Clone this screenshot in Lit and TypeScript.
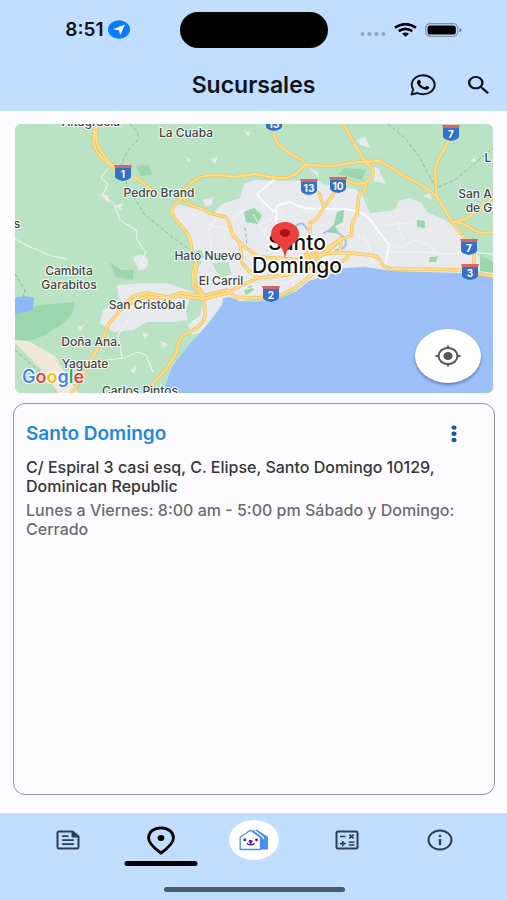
import { LitElement, html, svg, css } from "lit";
import { customElement } from "lit/decorators.js";

const HIGHWAYS = [
  "M96 122 Q93 135 94 144 Q96 152 103 159 L115 169 L140 180 L152 190 L166 196 L182 197 L189 205 L197 207 L213 214 L225 217 Q229 219 230 226 L232 234 L240 243 L258 257 L277 258 L303 260 Q312 252 327 248 L340 240",
  "M98 122 Q94 136 98 146 Q102 154 108 161 L117 169",
  "M182 197 L171 210 Q174 218 182 227 Q192 238 191 247 L197 265 L194 280 L203 294",
  "M182 197 Q184 186 200 177 Q216 173 233 177 L255 174 L269 177 L285 178 Q294 176 298 172 Q304 165 307 165 L332 166 L359 162 L379 161 Q390 166 402 175 L425 187 L437 197 L452 222 L469 244",
  "M274 132 Q274 140 279 145 L292 155 Q302 158 305 165",
  "M342 122 L355 145 L365 162 Q374 168 373 174 L365 184 Q368 190 359 195 L357 215 Q350 222 352 235 L340 240 L327 250",
  "M456 122 L449 140 L437 162 L435 172 L437 197",
  "M452 222 Q462 222 469 227 T482 233 L495 232",
  "M452 222 Q464 221 472 215 T495 196",
  "M319 193 L324 207 L317 219 L310 223 L310 240 L304 260",
  "M334 193 L324 207",
  "M332 180 L345 180 L356 184 L364 183",
  "M71 395 L87 367 L100 345 L108 325 L123 307 Q130 297 137 295 L147 293 L167 297 L180 293 L203 296 L227 290 L236 297 L255 298 L279 296 L295 288 L309 277 Q316 270 330 266",
  "M125 308 Q134 299 147 297 L160 298 L180 296 L203 299 L228 293",
  "M150 387 L167 368 L177 352 Q177 340 184 335 L198 327 Q207 318 205 312 L203 297 L193 285 L193 272 L196 262",
  "M240 243 L242 263 L250 272 L258 278 L232 290",
  "M258 278 L287 275 L307 270 L320 256 L333 247 L341 238 L340 253",
  "M303 260 Q320 252 350 253 L370 255 Q379 256 381 262 Q384 268 392 269 L420 269 L463 270 L495 277",
  "M474 249 L474 270",
  "M330 268 L345 260 L350 253",
];

const STREETS = [
  "M275 179 L257 194 L262 201 L275 212 L277 206 L289 202 L304 208 L319 209 L345 209 Q364 211 371 221 L389 245 L385 266",
  "M277 212 L276 222 L284 230",
];

const LANES = [
  "M15 239 L30 247 L52 256 L66 259",
  "M108 168 L101 178 L108 184 L103 194 L114 204 L120 220 L136 230 L137 240 L146 252 L140 265",
  "M385 252 L420 252 L447 254 L470 252 L493 254",
  "M362 238 Q371 239 372 264",
  "M384 240 L400 249 L414 240 L430 245 L434 252",
  "M397 222 L404 240 M380 226 L414 222",
  "M92 365 L105 360 L125 358 L137 352 L146 355 L153 372 M122 358 L118 335 L128 320",
  "M247 207 L232 219 M253 214 L268 240 M262 224 L284 212",
  "M218 213 L209 231 L212 255 M207 224 L230 230",
  "M262 290 L282 284 L304 276 M240 290 L272 284",
  "M283 257 L286 278 M292 246 L294 288 M316 241 L318 268 M270 266 L330 258 M268 246 L312 246",
];

const BORDERS = [
  "M130 124 Q140 132 138 140 Q124 152 121 168 L128 188 L145 215 L170 235 L190 250",
  "M388 124 L405 138 L420 158 L436 188 L455 180 L493 148",
  "M15 274 L25 290 L22 302 L15 310",
  "M245 228 L247 244 M15 350 L45 376",
];

const FOREST = [
  "M15 314 Q30 305 52 304 L75 302 Q74 320 52 330 Q36 343 15 340Z",
  "M110 262 L120 270 L134 270 L133 280 L116 277Z",
  "M136 166 L148 165 L153 174 L141 176Z",
  "M190 252 L201 250 L204 257 L192 262Z",
  "M244 212 L254 208 L262 215 L258 224 L246 222Z",
  "M337 212 L344 210 L343 222 L335 226 L340 234 L326 232 L334 224Z",
  "M417 220 L425 221 L425 228 L417 227Z",
  "M430 257 L438 256 L436 262 L429 262Z",
  "M244 290 L251 285 L254 290 L246 295Z",
  "M345 168 L366 170 L362 180 L338 174Z",
  "M480 255 L493 262 L493 273 L480 271Z",
];

const CLEARINGS = [
  "M99 194 L108 195 L109 203 Z",
  "M115 206 L123 203 L121 210Z",
  "M210 159 L218 157 L215 164Z M243 130 L250 132 L249 137Z M186 156 L191 160 L188 162Z",
  "M356 140 L365 137 L371 148 L361 145Z M372 167 L378 168 L386 184 L374 181Z",
  "M310 168 L318 172 L319 178 L312 172Z",
  "M133 258 Q142 250 148 260 Q149 270 139 270Z",
  "M203 200 L213 197 L212 205 L205 206Z",
  "M424 196 L430 193 L432 200Z M470 160 L475 158 L476 163Z",
  "M78 327 L85 324 L80 331Z M142 333 L149 334 L145 339Z M130 370 L137 366 L134 374Z M160 341 L168 344 L163 348Z",
];

const LABELS: [number, number, string][] = [
  [91, 126, "Altagracia"],
  [186, 137, "La Cuaba"],
  [159, 197, "Pedro Brand"],
  [208, 260, "Hato Nuevo"],
  [69, 275, "Cambita"],
  [69, 289, "Garabitos"],
  [221, 285, "El Carril"],
  [147, 309, "San Cristóbal"],
  [91, 346, "Doña Ana."],
  [85, 368, "Yaguate"],
  [140, 395, "Carlos Pintos"],
  [475, 198, "San A"],
  [479, 212, "de G"],
  [17, 228, "s"],
  [488, 162, "L"],
];

const SHIELDS: [number, number, string][] = [
  [123, 173, "1"],
  [274, 123, "13"],
  [451, 133, "7"],
  [309, 187, "13"],
  [338, 185, "10"],
  [469, 247, "7"],
  [470, 272, "3"],
  [271, 294, "2"],
];

@customElement("branch-map")
class BranchMap extends LitElement {
  static styles = css`
    :host {
      display: block;
      position: relative;
      border-radius: 6px;
      overflow: hidden;
      background: #bae3c6;
    }
    .map {
      display: block;
      width: 100%;
      height: 100%;
    }
    .label {
      font: 500 12px Inter, sans-serif;
      fill: #3f4744;
      stroke: #f4f8f5;
      stroke-width: 2px;
      paint-order: stroke;
      text-anchor: middle;
    }
    .city {
      font: 500 21px Inter, sans-serif;
      fill: #111;
      stroke: #fff;
      stroke-width: 3px;
      paint-order: stroke;
      text-anchor: middle;
    }
    .num {
      font: 700 10px Inter, sans-serif;
      fill: #fff;
      text-anchor: middle;
    }
    .brand {
      font: 600 18px Inter, sans-serif;
      stroke: #fff;
      stroke-width: 2px;
      paint-order: stroke;
    }
    .line {
      fill: none;
      stroke-linejoin: round;
      stroke-linecap: round;
    }
    .locate {
      position: absolute;
      right: 12px;
      bottom: 10px;
      width: 66px;
      height: 54px;
      padding: 0;
      border: 0;
      border-radius: 50%;
      background: #fff;
      box-shadow: 0 2px 3px rgba(40, 60, 110, 0.5);
      display: grid;
      place-items: center;
    }
  `;

  render() {
    return html`
      <svg class="map" viewBox="15 124 478 269" preserveAspectRatio="xMidYMid slice" role="img" aria-label="Mapa de Santo Domingo">
        <rect x="-400" y="-100" width="1400" height="800" fill="#bae3c6" />
        <g fill="#e9eaee">
          <path d="M175 204 L190 207 L213 213 L222 204 L240 198 L244 184 L255 180 L280 181 L318 180 L322 184 L356 189 L362 195 L370 213 L395 210 L399 201 L410 198 L421 203 L428 213 L445 220 L454 226 L467 242 L482 260 L493 270 V290 H300 L222 305 L200 333 L192 335 L188 325 L205 308 L200 298 L196 270 L202 262 L193 250 L185 230 L172 212Z" />
          <path d="M117 285 L143 283 L167 283 L187 290 L204 296 L205 316 L190 320 L173 322 L147 322 L133 330 L113 332 L100 323 L103 310 L119 303Z" />
          ${CLEARINGS.map((d) => svg`<path d=${d} />`)}
        </g>
        <path d="M190 298 L203 298 L200 316 L188 324 L186 310Z M212 263 L228 262 L232 274 L220 278Z" fill="#bae3c6" />
        <path d="M13 338 L30 342 L55 356 L66 375 L80 395 H60 L40 368 L13 341Z" fill="#f0e9da" />
        <g fill="#9bd6ad">${FOREST.map((d) => svg`<path d=${d} />`)}</g>
        <path d="M13 298 L25 296 L34 298 L33 310 L22 313 L13 315Z" fill="#8db8f7" />
        <path
          fill="#9dc0f8"
          d="M162 395 L172 367 L187 347 L200 333 L213 318 L222 305 L223 298 L230 297 L240 301 L255 302 L279 299 L295 292 L309 281 L329 274 L345 268 L365 267 L392 271 L459 273 L500 278 L1000 290 V700 H162Z"
        />
        <path class="line" stroke="#a6c0e8" stroke-width="2" d="M324 233 Q330 228 338 233 T346 242 Q346 250 336 250 M296 226 Q303 220 307 229" />
        <g class="line" stroke="#8fb8a0" stroke-width="1" stroke-dasharray="3 3">${BORDERS.map((d) => svg`<path d=${d} />`)}</g>
        <g class="line" stroke="#f3f6f6" stroke-width="1">${LANES.map((d) => svg`<path d=${d} />`)}</g>
        <g class="line" stroke="#fafbfb" stroke-width="2">${STREETS.map((d) => svg`<path d=${d} />`)}</g>
        <g class="line" stroke="#f3c463" stroke-width="3.400">${HIGHWAYS.map((d) => svg`<path d=${d} />`)}</g>
        <g class="line" stroke="#fddf8a" stroke-width="1.800">${HIGHWAYS.map((d) => svg`<path d=${d} />`)}</g>
        ${LABELS.map(([x, y, t]) => svg`<text class="label" x=${x} y=${y}>${t}</text>`)}
        ${SHIELDS.map(
          ([x, y, t]) => svg`
            <g transform="translate(${x} ${y})">
              <path d="M-8 -6 H8 V4 Q7 6 4 7 L0 8 L-4 7 Q-7 6 -8 4Z" fill="#3470c4" />
              <path d="M-9 -8 H9 L8 -5 H-8Z" fill="#dc6464" />
              <text class="num" x="0" y="5">${t}</text>
            </g>`,
        )}
        <text class="city" x="297" y="250">Santo</text>
        <text class="city" x="297" y="273">Domingo</text>
        <path
          d="M285 259 C284 250 281 247 276 243 C272 240 271 237 271 234 C271 227 277 222 285 222 C293 222 299 227 299 234 C299 237 298 240 294 243 C289 247 286 250 285 259Z"
          fill="#ea3f3d"
        />
        <ellipse cx="285" cy="233" rx="5" ry="4" fill="#a91212" />
        <text class="brand" x="22" y="383"><tspan fill="#4285f4">G</tspan><tspan fill="#ea4335">o</tspan><tspan fill="#fbbc05">o</tspan><tspan fill="#4285f4">g</tspan><tspan fill="#34a853">l</tspan><tspan fill="#ea4335">e</tspan></text>
      </svg>
      <button class="locate" aria-label="Mi ubicación">
        <svg width="26" height="22" viewBox="0 0 26 22" fill="none" stroke="#555" stroke-width="2">
          <ellipse cx="13" cy="11" rx="9.500" ry="8" />
          <ellipse cx="13" cy="11" rx="4.600" ry="4" fill="#555" stroke="none" />
          <path d="M13 0.500V3.500M13 18.500V21.500M0.500 11H3.500M22.500 11H25.500" />
        </svg>
      </button>
    `;
  }
}

@customElement("app-root")
class AppRoot extends LitElement {
  static styles = css`
    :host {
      display: flex;
      flex-direction: column;
      min-height: 100vh;
      background: #fcfcff;
      font-family: Inter, "Liberation Sans", sans-serif;
      color: #101418;
    }
    * {
      box-sizing: border-box;
    }
    button {
      padding: 0;
      border: 0;
      background: none;
      color: inherit;
      font: inherit;
    }
    svg {
      display: block;
    }
    header {
      background: #c1ddff;
    }
    .status {
      display: grid;
      grid-template-columns: 1fr 148px 1fr;
      align-items: center;
      height: 59px;
    }
    .clock {
      display: flex;
      align-items: center;
      justify-content: flex-end;
      gap: 4px;
      padding-right: 50px;
      font-size: 19px;
      font-weight: 600;
    }
    .island {
      height: 36px;
      border-radius: 18px;
      background: #000;
    }
    .signals {
      display: flex;
      align-items: center;
      gap: 8px;
      padding-left: 32px;
    }
    .bar {
      display: grid;
      grid-template-columns: 1fr auto 1fr;
      align-items: center;
      height: 52px;
    }
    h1 {
      grid-column: 2;
      margin: 0;
      font-size: 23px;
      line-height: 28px;
      font-weight: 600;
    }
    .actions {
      display: flex;
      justify-content: flex-end;
      gap: 32px;
      padding-right: 18px;
    }
    main {
      flex: 1;
      display: flex;
      flex-direction: column;
      gap: 10px;
      padding: 13px 12px 18px 13px;
    }
    branch-map {
      height: 269px;
      margin: 0 2px;
    }
    .card {
      flex: 1;
      padding: 17px 12px;
      border: 1px solid #96969a;
      border-radius: 12px;
    }
    .head {
      display: flex;
      align-items: center;
      justify-content: space-between;
      height: 26px;
      padding-right: 24px;
      margin-bottom: 11px;
    }
    h2 {
      margin: 0;
      font-size: 19px;
      line-height: 24px;
      font-weight: 600;
      color: #2288dc;
    }
    p {
      margin: 0 0 5px;
      font-size: 16px;
      line-height: 19px;
      color: #36363a;
      font-weight: 500;
    }
    .hours {
      color: #6c6c71;
    }
    nav {
      height: 87px;
      background: #c1ddff;
      display: flex;
      flex-direction: column;
      justify-content: space-between;
      align-items: center;
      padding: 0 20px 8px 21px;
      color: #2e3f50;
    }
    .tabs {
      width: 100%;
      display: grid;
      grid-template-columns: repeat(5, 1fr);
    }
    .tab {
      height: 54px;
      display: grid;
      place-items: center;
    }
    .active {
      color: #000;
      position: relative;
    }
    .active::after {
      content: "";
      position: absolute;
      bottom: 1px;
      left: 50%;
      width: 73px;
      height: 5px;
      border-radius: 3px;
      background: #000;
      transform: translateX(-50%);
    }
    .home {
      width: 50px;
      height: 40px;
      border-radius: 50%;
      background: #fff;
      display: grid;
      place-items: center;
    }
    .indicator {
      width: 181px;
      height: 5px;
      border-radius: 3px;
      background: #4a5b6a;
    }
  `;

  render() {
    return html`
      <header>
        <div class="status">
          <div class="clock">
            <span>8:51</span>
            <svg width="22" height="19" viewBox="0 0 22 19">
              <ellipse cx="11" cy="9.500" rx="11" ry="9.200" fill="#0a7bff" />
              <path d="M17 4.500 L12.200 15 L11 10.200 L5 9.300Z" fill="#fff" />
            </svg>
          </div>
          <div class="island"></div>
          <div class="signals">
            <svg width="26" height="14" viewBox="0 0 26 14" fill="#91a6bf">
              <circle cx="2.500" cy="11" r="2" /><circle cx="9.500" cy="11" r="2" /><circle cx="16.500" cy="11" r="2" /><circle cx="23.500" cy="11" r="2" />
            </svg>
            <svg width="23" height="14" viewBox="0 0 23 14" fill="none" stroke="#000" stroke-width="2.600">
              <path d="M1 4.600 Q11.500 -2.300 22 4.600" />
              <path d="M4.700 8.200 Q11.500 3.600 18.300 8.200" />
              <path d="M8 10.800 Q11.500 8.400 15 10.800 L11.500 13.800Z" fill="#000" stroke="none" />
            </svg>
            <svg width="37" height="14" viewBox="0 0 37 14">
              <rect x="0.700" y="0.700" width="32" height="12.600" rx="4.500" fill="none" stroke="#7f93ab" stroke-width="1.200" />
              <rect x="2.600" y="2.400" width="28.200" height="9.200" rx="2.600" />
              <path d="M34.600 5 Q36.500 5.500 36.500 7 T34.600 9Z" fill="#5c6c80" />
            </svg>
          </div>
        </div>
        <div class="bar">
          <h1>Sucursales</h1>
          <div class="actions">
            <button aria-label="WhatsApp">
              <svg width="26" height="22" viewBox="0 0 26 22">
                <path
                  d="M1.500 20.500 L3.200 15.300 C1.800 13.300 1.500 11.500 1.700 9.900 C2.300 5 7 1.200 13 1.200 C19.500 1.200 24.700 5.400 24.700 10.700 C24.700 16 19.500 20.200 13 20.200 C10.900 20.200 9 19.800 7.400 19Z"
                  fill="none"
                  stroke="#101418"
                  stroke-width="1.900"
                  stroke-linejoin="round"
                />
                <path
                  d="M8.100 6.200 C8.800 5.600 9.700 5.700 10.100 6.500 L11 8.200 C11.200 8.700 10.200 9.400 10 9.800 C11 11.500 12.800 12.700 15 13.300 C15.600 13 16 12 16.600 12 C17.400 12.200 18.800 12.700 19.200 13.100 C19.500 14.500 18 15.800 16 15.700 C12 15.300 8 12.200 7 9.200 C6.700 8 7.200 6.900 8.100 6.200Z"
                />
              </svg>
            </button>
            <button aria-label="Buscar">
              <svg width="21" height="18" viewBox="3 3 17.500 17.500" preserveAspectRatio="none" fill="#101418">
                <path
                  d="M15.500 14h-.79l-.28-.27C15.410 12.590 16 11.110 16 9.500 16 5.910 13.090 3 9.500 3S3 5.910 3 9.500 5.910 16 9.500 16c1.610 0 3.090-.59 4.230-1.570l.27.28v.79l5 4.990L20.490 19l-4.990-5zm-6 0C7.010 14 5 11.990 5 9.500S7.010 5 9.500 5 14 7.010 14 9.500 11.990 14 9.500 14z"
                />
              </svg>
            </button>
          </div>
        </div>
      </header>
      <main>
        <branch-map></branch-map>
        <section class="card">
          <div class="head">
            <h2>Santo Domingo</h2>
            <button aria-label="Más opciones">
              <svg width="8" height="18" viewBox="1 0 8 18" fill="#155a91">
                <ellipse cx="5" cy="2.600" rx="2.600" ry="2.200" /><ellipse cx="5" cy="8.800" rx="2.600" ry="2.200" /><ellipse cx="5" cy="15" rx="2.600" ry="2.200" />
              </svg>
            </button>
          </div>
          <p>C/ Espiral 3 casi esq, C. Elipse, Santo Domingo 10129, Dominican Republic</p>
          <p class="hours">Lunes a Viernes: 8:00 am - 5:00 pm Sábado y Domingo: Cerrado</p>
        </section>
      </main>
      <nav>
        <div class="tabs">
          <button class="tab" aria-label="Noticias">
            <svg width="24" height="20" viewBox="0 0 24 20" fill="none" stroke="currentColor" stroke-width="2">
              <path d="M3 1.500 H16.500 L22.500 6.500 V17 Q22.500 18.500 21 18.500 H3 Q1.500 18.500 1.500 17 V3 Q1.500 1.500 3 1.500Z" />
              <path d="M16 1.500 V7 H22.500Z" fill="currentColor" stroke-width="1" />
              <path d="M6 6.200 H12.500 M6 10.200 H18 M6 14.200 H18" stroke-width="1.700" />
            </svg>
          </button>
          <button class="tab active" aria-label="Sucursales">
            <svg width="28" height="29" viewBox="0 0 28 29">
              <path d="M14 27 C9 23.500 1.500 18 1.500 11.800 C1.500 6 7 1.800 14 1.800 S26.500 6 26.500 11.800 C26.500 18 19 23.500 14 27Z" fill="none" stroke="#000" stroke-width="2.800" stroke-linejoin="round" />
              <ellipse cx="14" cy="12" rx="3.400" ry="2.900" />
            </svg>
          </button>
          <button class="tab" aria-label="Inicio">
            <span class="home">
              <svg width="30" height="22" viewBox="0 0 30 22" fill="none">
                <path d="M12 1.500 L18 0.800 L29 8 V20.500 H21 V8.500Z" fill="#4a8ff0" />
                <path d="M15.500 1.500 L24.500 8.500 V10" stroke="#fff" stroke-width="1.200" />
                <path d="M1.200 8 L11.500 1.200 L21.500 8.500 V20.500 H1.200Z" fill="#fff" stroke="#4a8ff0" stroke-width="1.300" stroke-linejoin="round" />
                <g fill="#5a22b4"><circle cx="5.800" cy="10.800" r="1.500" /><circle cx="17.500" cy="10.800" r="1.500" /><ellipse cx="11.600" cy="12.200" rx="2" ry="1.500" /></g>
                <path d="M7.800 14.200 Q9.500 16.800 11.600 14.800 Q13.700 16.800 15.400 14.200 M11.600 12.500 V16.500" stroke="#5a22b4" stroke-width="1.400" />
              </svg>
            </span>
          </button>
          <button class="tab" aria-label="Calculadora">
            <svg width="24" height="20" viewBox="0 0 24 20" fill="none" stroke="currentColor">
              <rect x="1.500" y="1.500" width="21" height="17" rx="1.500" stroke-width="2" />
              <path d="M5 6.500 H10.500 M4.800 13.600 H10.800 M7.800 11 V16.200 M13.700 12.300 H19.300 M13.700 15 H19.300" stroke-width="1.600" />
              <path d="M14.300 4.600 L18.700 8.400 M18.700 4.600 L14.300 8.400" stroke-width="1.800" />
            </svg>
          </button>
          <button class="tab" aria-label="Información">
            <svg width="26" height="22" viewBox="0 0 26 22" fill="none" stroke="currentColor" stroke-width="2">
              <ellipse cx="13" cy="11" rx="11.500" ry="9.500" />
              <path d="M13 10 V16" stroke-width="2.400" /><path d="M13 5.800 V8" stroke-width="2.400" />
            </svg>
          </button>
        </div>
        <div class="indicator"></div>
      </nav>
    `;
  }
}
